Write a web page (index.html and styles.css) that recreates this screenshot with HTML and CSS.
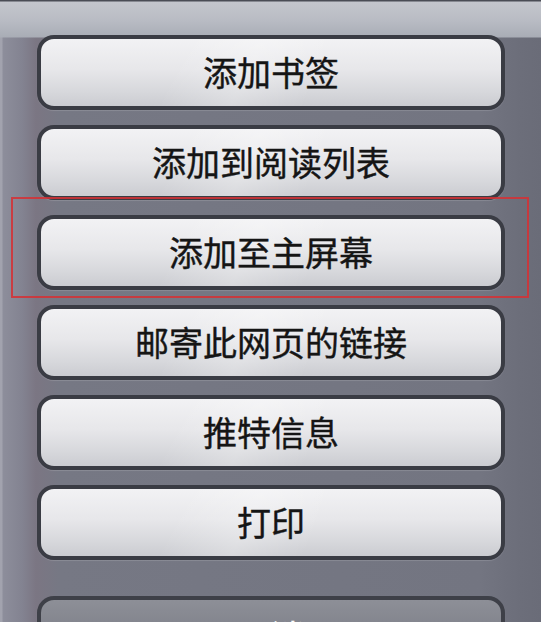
FILE: index.html
```html
<!DOCTYPE html>
<html lang="zh-CN">
<head>
<meta charset="utf-8">
<title>操作</title>
<link rel="stylesheet" href="styles.css">
</head>
<body>
<div class="screen">
  <div class="sheet">
    <div class="btn">添加书签</div>
    <div class="btn">添加到阅读列表</div>
    <div class="btn">添加至主屏幕</div>
    <div class="btn">邮寄此网页的链接</div>
    <div class="btn">推特信息</div>
    <div class="btn">打印</div>
    <div class="btn cancel">取消</div>
  </div>
  <div class="highlight"></div>
</div>
</body>
</html>
```
FILE: styles.css
```css
html, body {
  margin: 0;
  padding: 0;
}
body {
  width: 541px;
  height: 622px;
  overflow: hidden;
  background: #777984;
}
.screen {
  position: relative;
  width: 541px;
  height: 622px;
  overflow: hidden;
  background:
    linear-gradient(180deg, #4a4c55 0px, #4a4c55 1px, #c4c6cd 2px, #b9bcc4 20px, #a9adb6 37px, transparent 38px),
    linear-gradient(90deg, #a2a3ae 0px, #a2a3ae 2px, #8d8e9b 3px, #838391 22px, #7b7683 36px, #767884 60px, #737581 480px, #6c6e7a 520px, #6a6c78 541px);
}
.sheet {
  display: flex;
  flex-direction: column;
  gap: 15px;
  padding: 35px 36px 0 37px;
}
.btn {
  box-sizing: border-box;
  height: 75px;
  flex: none;
  display: flex;
  align-items: center;
  justify-content: center;
  border: 4px solid #3a3c44;
  border-radius: 17px;
  background:
    linear-gradient(115deg, rgba(255,255,255,0) 30%, rgba(255,255,255,0.25) 45%, rgba(255,255,255,0) 60%),
    linear-gradient(180deg, #f2f2f4 0%, #e7e7ea 45%, #d6d7db 80%, #cbccd1 100%);
  box-shadow: 0 1px 1px rgba(255,255,255,0.15);
  font-family: "Noto Sans CJK SC", "Noto Sans", sans-serif;
  font-size: 34px;
  color: #151515;
  -webkit-text-stroke: 0.4px #151515;
  padding-bottom: 3px;
}
.cancel {
  margin-top: 21px;
  align-items: flex-start;
  border-color: #3e4048;
  background: linear-gradient(180deg, #8d8f97 0%, #7d7f88 60%, #6f717a 100%);
  color: #ffffff;
  -webkit-text-stroke: 0.4px #ffffff;
  padding-top: 11px;
  padding-bottom: 0;
}
.highlight {
  position: absolute;
  left: 11px;
  top: 197px;
  width: 518px;
  height: 101px;
  box-sizing: border-box;
  border: 2px solid rgba(214, 48, 52, 0.85);
}
```
